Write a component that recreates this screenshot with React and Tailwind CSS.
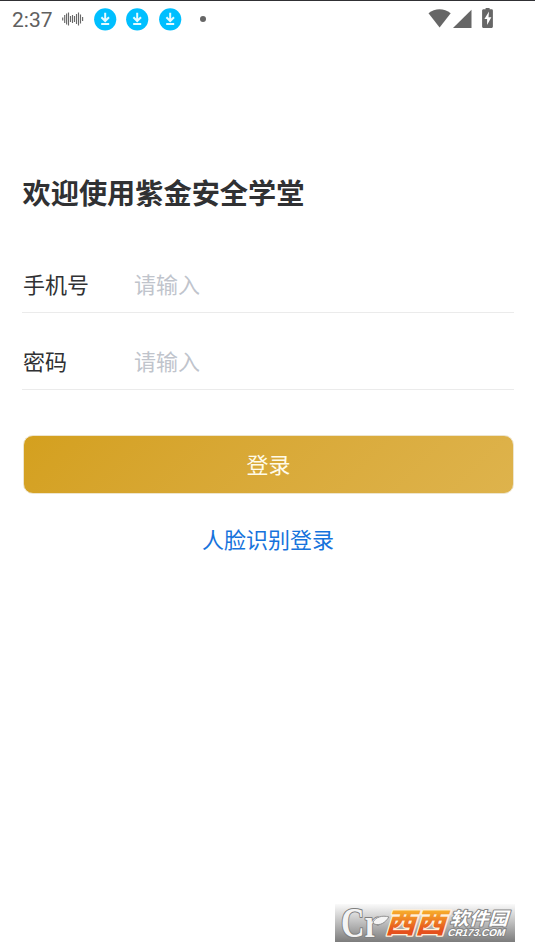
import React from 'react';

const FONT = "font-['Noto_Sans_CJK_SC','Noto_Sans',sans-serif]";

const DownloadBadge = () => (
  <svg width="23" height="23" viewBox="0 0 23 23" className="shrink-0">
    <circle cx="11.2" cy="11.3" r="11.1" fill="#00bfff" />
    <path d="M11.2 4.8v8M7.4 9.2l3.8 3.8L15 9.2M7.2 16h8" fill="none" stroke="#e6faff" strokeWidth="2" />
  </svg>
);

// [x, half height] of every bar in the wave
const WAVE = [
  [0.7, 1.5], [2.7, 4], [4.6, 5.5], [6.5, 6.5], [8.5, 3], [10.5, 4], [12.5, 3], [14.5, 5], [16.5, 6.5], [18.5, 4.5], [20.6, 2],
];

const WaveIcon = () => (
  <svg width="22" height="14" viewBox="0 0 22 14">
    {WAVE.map(([x, h]) => (
      <line key={x} x1={x} x2={x} y1={7 - h} y2={7 + h} stroke="#686868" strokeWidth="1.15" />
    ))}
  </svg>
);

const StatusBar = () => (
  <header className="flex h-[39px] items-start border-t border-[#303034] pl-3">
    <span className="mt-[6px] w-[41px] font-[Roboto,sans-serif] text-[21px] leading-[26px] text-[#606060]">2:37</span>
    <div className="mt-[11px] ml-[9px]"><WaveIcon /></div>
    <div className="mt-[6.5px] ml-[9.5px] flex gap-[9.8px]">
      <DownloadBadge />
      <DownloadBadge />
      <DownloadBadge />
    </div>
    <div className="mt-[15px] ml-[18px] h-[6px] w-[6px] rounded-full bg-[#666]" />
    <svg width="68" height="22" viewBox="0 0 68 22" className="mt-[6px] mr-[39px] ml-auto" fill="#666">
      <path d="M.5 6.2C7 .8 16 .8 22.7 6.2L11.6 20.5z" />
      <path d="M43.5 2.8V20.9H25z" />
      <path d="M55.6 2.3h2V1h4v1.3h2c.9 0 1.3.6 1.3 1.4v15.7c0 .9-.6 1.5-1.5 1.5h-7.8c-.9 0-1.5-.6-1.5-1.5V3.7c0-.8.6-1.4 1.5-1.4z" />
      <path d="M61 4.6l-4.6 7.4h2.7v6l4.3-7.8h-2.9z" fill="#fff" />
    </svg>
  </header>
);

const Field = ({ label, type = 'text' }) => (
  <label className="flex h-[77px] items-center border-b border-[#ebebeb] pt-[17px]">
    <span className="w-[112px] pl-px text-[22px] leading-8 text-[#303133]">{label}</span>
    <input
      type={type}
      placeholder="请输入"
      className="min-w-0 flex-1 text-[22px] leading-8 outline-none placeholder:text-[#c0c4cc]"
    />
  </label>
);

const SiteBadge = () => (
  <svg width="180" height="38" viewBox="0 0 180 38" className="block overflow-visible">
    <defs>
      <linearGradient id="plate" x1="0" y1="0" x2="0" y2="1">
        <stop offset="0" stopColor="#fafafa" />
        <stop offset="0.5" stopColor="#bdbdbd" />
        <stop offset="1" stopColor="#7c7c7c" />
      </linearGradient>
      <linearGradient id="orange" x1="0" y1="0" x2="0" y2="1">
        <stop offset="0.25" stopColor="#f7ad2c" />
        <stop offset="0.75" stopColor="#e5501c" />
      </linearGradient>
    </defs>
    <rect width="180" height="38" fill="url(#plate)" />
    <g fill="#f4f4f4" stroke="#808080" strokeLinejoin="round">
      <text x="6" y="33" fontSize="43" fontWeight="700" textLength="38" lengthAdjust="spacingAndGlyphs" fontFamily="Liberation Serif, serif" strokeWidth="2.2" paintOrder="stroke">Cr</text>
      <path d="M38 18c3-5 9-7 16-5-4 6-9 9-15 7z" strokeWidth="0.8" />
    </g>
    <g transform="translate(51 0) skewX(-17)" fontFamily="Noto Sans CJK SC, sans-serif" fontWeight="900">
      <text x="8" y="29" fontSize="28" textLength="60" lengthAdjust="spacingAndGlyphs" fill="url(#orange)" stroke="#fff0da" strokeWidth="2.6" paintOrder="stroke" strokeLinejoin="round">西西</text>
      <g fill="#fff" stroke="#858585" strokeWidth="2" paintOrder="stroke" strokeLinejoin="round">
        <text x="70" y="21" fontSize="18" fontWeight="700" textLength="58" lengthAdjust="spacingAndGlyphs">软件园</text>
        <text x="71" y="32" fontSize="10" textLength="57" lengthAdjust="spacingAndGlyphs" fontFamily="Liberation Sans, sans-serif" fontWeight="700">CR173.COM</text>
      </g>
    </g>
  </svg>
);

const App = () => (
  <div className={`flex h-[952px] w-[535px] flex-col overflow-hidden bg-white ${FONT}`}>
    <StatusBar />

    <main className="flex flex-1 flex-col pr-[21px] pl-[22px]">
      <h1 className="mt-[133px] pl-[0.5px] text-[28.2px] leading-[40px] font-bold text-[#303133]">欢迎使用紫金安全学堂</h1>

      <form className="mt-6">
        <Field label="手机号" />
        <Field label="密码" type="password" />
        <button
          type="button"
          className="mt-[45px] ml-px block h-[59px] w-[491px] rounded-[10px] border border-[#eee5cd] bg-linear-135 from-[#d4a01e] to-[#deb34c] pb-[3px] text-[22px] text-[#fffbe9]"
        >
          登录
        </button>
      </form>

      <a className="mt-[28px] self-center text-[22px] leading-8 text-[#1673dc]">人脸识别登录</a>
    </main>

    <footer className="mr-5 mb-[10px] self-end">
      <SiteBadge />
    </footer>
  </div>
);

export default App;
